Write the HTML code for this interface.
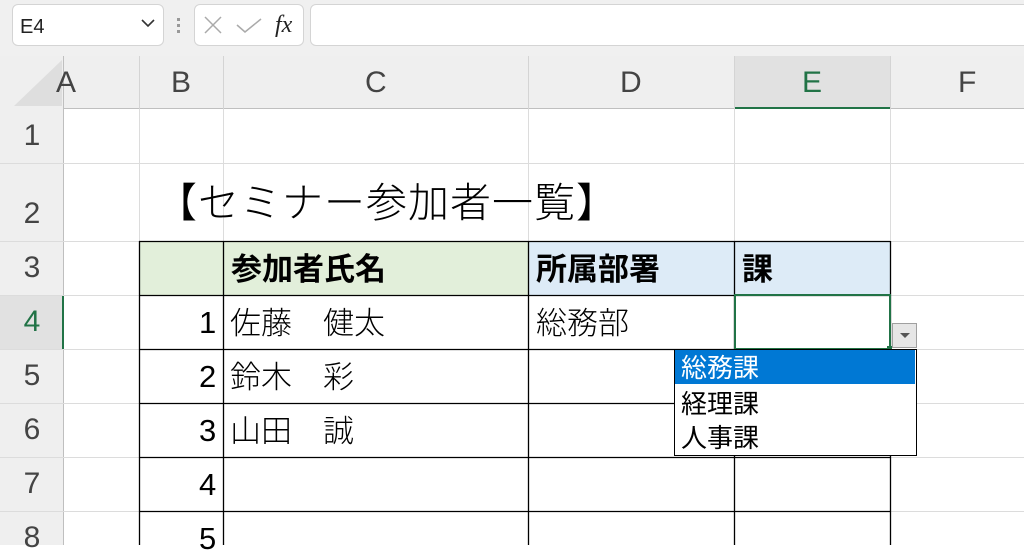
<!DOCTYPE html>
<html><head><meta charset="utf-8"><style>
body{margin:0;width:1024px;height:545px;overflow:hidden;background:#fff;position:relative;font-family:"Liberation Sans","Noto Sans CJK JP",sans-serif}
.a{position:absolute;box-sizing:border-box}
.t{position:absolute;white-space:nowrap;line-height:1;color:#000}
.ch{font-size:30px;color:#444;top:68px}
.rh{font-size:30px;color:#444;width:64px;text-align:center;left:0}
.c{font-size:31px;font-weight:300}
</style></head><body>
<div class="a" style="left:0;top:0;width:1024px;height:56px;background:#f0f0f0"></div>
<div class="a" style="left:12px;top:4px;width:152px;height:42px;background:#fff;border:1px solid #d4d4d4;border-radius:6px"></div>
<div class="t" style="left:20px;top:17px;font-size:20px;color:#222">E4</div>
<svg class="a" style="left:140px;top:18px" width="16" height="10"><path d="M2 2 L8 8 L14 2" fill="none" stroke="#333" stroke-width="1.6"/></svg>
<div class="a" style="left:177px;top:18px;width:3px;height:3px;background:#999"></div>
<div class="a" style="left:177px;top:24px;width:3px;height:3px;background:#999"></div>
<div class="a" style="left:177px;top:30px;width:3px;height:3px;background:#999"></div>
<div class="a" style="left:194px;top:4px;width:110px;height:42px;background:#fff;border:1px solid #d4d4d4;border-radius:6px"></div>
<svg class="a" style="left:203px;top:16px" width="20" height="18"><path d="M2 1 L18 17 M18 1 L2 17" stroke="#aaa" stroke-width="1.5"/></svg>
<svg class="a" style="left:236px;top:18px" width="26" height="16"><path d="M1 7 L9 14 L25 1" fill="none" stroke="#aaa" stroke-width="1.5"/></svg>
<div class="t" style="left:275px;top:13px;font-size:24px;font-style:italic;font-family:'Liberation Serif',serif;color:#222">fx</div>
<div class="a" style="left:310px;top:4px;width:730px;height:42px;background:#fff;border:1px solid #d4d4d4;border-radius:6px"></div>
<div class="a" style="left:0;top:56px;width:1024px;height:53px;background:#efefef;border-bottom:1px solid #bfbfbf"></div>
<div class="a" style="left:0;top:56px;width:64px;height:489px;background:#efefef;border-right:1px solid #bfbfbf"></div>
<svg class="a" style="left:14px;top:60px" width="48" height="46"><path d="M48 0 L48 46 L0 46 Z" fill="#dedede"/></svg>
<div class="a" style="left:734px;top:56px;width:156px;height:53px;background:#e1e1e1;border-bottom:2px solid #217346"></div>
<div class="a" style="left:0;top:295px;width:64px;height:54px;background:#e1e1e1;border-right:2px solid #217346"></div>
<div class="a" style="left:139px;top:56px;width:1px;height:53px;background:#d4d4d4"></div>
<div class="a" style="left:223px;top:56px;width:1px;height:53px;background:#d4d4d4"></div>
<div class="a" style="left:528px;top:56px;width:1px;height:53px;background:#d4d4d4"></div>
<div class="a" style="left:734px;top:56px;width:1px;height:53px;background:#d4d4d4"></div>
<div class="a" style="left:890px;top:56px;width:1px;height:53px;background:#d4d4d4"></div>
<div class="t ch" style="left:56px">A</div>
<div class="t ch" style="left:171px">B</div>
<div class="t ch" style="left:365px">C</div>
<div class="t ch" style="left:620px">D</div>
<div class="t ch" style="left:802px;color:#217346">E</div>
<div class="t ch" style="left:958px">F</div>
<svg class="a" style="left:0;top:0" width="1024" height="545">
<g stroke="#dcdcdc" stroke-width="1">
<path d="M0 163.5H1024M0 241.5H1024M0 295.5H1024M0 349.5H1024M0 403.5H1024M0 457.5H1024M0 511.5H1024"/>
<path d="M139.5 109V545M223.5 109V545M528.5 109V545M734.5 109V545M890.5 109V545"/>
</g></svg>
<div class="t rh" style="top:121px">1</div>
<div class="t rh" style="top:199px">2</div>
<div class="t rh" style="top:253px">3</div>
<div class="t rh" style="top:307px;color:#217346">4</div>
<div class="t rh" style="top:361px">5</div>
<div class="t rh" style="top:415px">6</div>
<div class="t rh" style="top:469px">7</div>
<div class="t rh" style="top:523px">8</div>
<div class="a" style="left:139px;top:241px;width:389px;height:54px;background:#e2efda"></div>
<div class="a" style="left:528px;top:241px;width:362px;height:54px;background:#ddebf7"></div>
<svg class="a" style="left:0;top:0" width="1024" height="545">
<g stroke="#000" stroke-width="1.3">
<path d="M139 241.5H890M139 295.5H890M139 349.5H890M139 403.5H890M139 457.5H890M139 511.5H890"/>
<path d="M139.5 241V545M223.5 241V545M528.5 241V545M734.5 241V545M890.5 241V545"/>
</g></svg>
<div class="a" style="left:734px;top:294px;width:157px;height:56px;border:2px solid #217346"></div>
<div class="a" style="left:887px;top:346px;width:5px;height:5px;background:#217346"></div>
<div class="t" style="left:156px;top:183px;font-size:41px;letter-spacing:1px;font-weight:300">【セミナー参加者一覧】</div>
<div class="t" style="left:231px;top:254px;font-size:31px;font-weight:bold">参加者氏名</div>
<div class="t" style="left:536px;top:254px;font-size:31px;font-weight:bold">所属部署</div>
<div class="t" style="left:742px;top:254px;font-size:31px;font-weight:bold">課</div>
<div class="t c" style="left:199px;top:307px">1</div>
<div class="t c" style="left:199px;top:361px">2</div>
<div class="t c" style="left:199px;top:415px">3</div>
<div class="t c" style="left:199px;top:469px">4</div>
<div class="t c" style="left:199px;top:523px">5</div>
<div class="t c" style="left:230px;top:308px">佐藤　健太</div>
<div class="t c" style="left:230px;top:362px">鈴木　彩</div>
<div class="t c" style="left:230px;top:416px">山田　誠</div>
<div class="t c" style="left:536px;top:308px">総務部</div>
<div class="a" style="left:892px;top:323px;width:25px;height:25px;background:#e6e6e6;border:1px solid #a0a0a0"></div>
<svg class="a" style="left:899px;top:332px" width="12" height="8"><path d="M1 1 L11 1 L6 6 Z" fill="#555"/></svg>
<div class="a" style="left:674px;top:349px;width:243px;height:107px;background:#fff;border:1px solid #000"></div>
<div class="a" style="left:675px;top:350px;width:240px;height:34px;background:#0078d4"></div>
<div class="t" style="left:681px;top:355px;font-size:26px;color:#fff">総務課</div>
<div class="t" style="left:681px;top:391px;font-size:26px">経理課</div>
<div class="t" style="left:681px;top:425px;font-size:26px">人事課</div>
</body></html>
